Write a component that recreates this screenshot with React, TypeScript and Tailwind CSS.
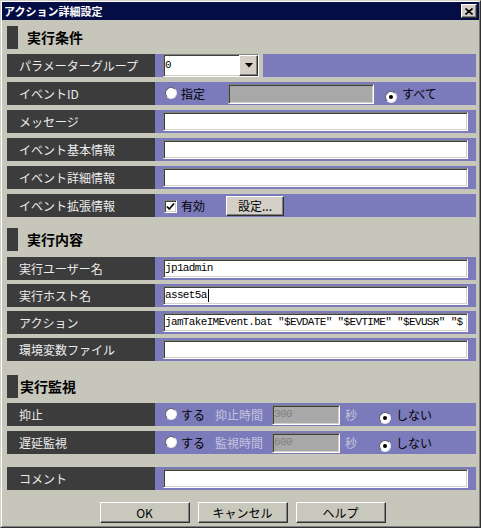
import type { ReactNode } from "react";

const sunken =
  "border border-t-[#808080] border-l-[#808080] border-b-white border-r-white shadow-[inset_1px_1px_0_#404040,inset_-1px_-1px_0_#d4d0c8]";
const raised =
  "border border-t-white border-l-white border-b-[#303030] border-r-[#303030] shadow-[inset_-1px_-1px_0_#808080]";

function Radio({ checked = false }: { checked?: boolean }) {
  return (
    <span className="relative inline-flex w-[12px] h-[12px] shrink-0 rounded-full bg-white border border-t-[#606060] border-l-[#606060] border-b-[#e8e8e8] border-r-[#e8e8e8] items-center justify-center">
      {checked && <span className="w-[4px] h-[4px] rounded-full bg-black" />}
    </span>
  );
}

function Checkbox() {
  return (
    <span className={`inline-flex w-[13px] h-[13px] shrink-0 bg-white ${sunken} items-center justify-center`}>
      <svg width="9" height="9" viewBox="0 0 9 9">
        <path d="M1 4.5 L3.3 7 L8 1.5" fill="none" stroke="#000" strokeWidth="1.7" />
      </svg>
    </span>
  );
}

function Section({ title, tight = false }: { title: string; tight?: boolean }) {
  return (
    <div className="flex h-[23px]">
      <div className="w-[11px] bg-[#3c3c3c]" />
      <div
        className={`flex items-end pb-[1px] text-[14px] font-bold text-black ${
          tight ? "ml-[2px]" : "ml-[9px]"
        }`}
      >
        {title}
      </div>
    </div>
  );
}

function Label({ text }: { text: string }) {
  return (
    <div className="w-[148px] shrink-0 bg-[#3c3c3c] text-[#ececec] text-[12px] flex items-center pl-[12px]">
      {text}
    </div>
  );
}

function Row({ label, children }: { label: string; children?: ReactNode }) {
  return (
    <div className="flex h-[23px]">
      <Label text={label} />
      <div className="flex-1 min-w-0 bg-[#7b7bbb] flex items-center px-[8px] text-[12px] text-black">
        {children}
      </div>
    </div>
  );
}

function TextBox({ value = "", caret = false }: { value?: string; caret?: boolean }) {
  return (
    <div
      className={`flex-1 min-w-0 h-[19px] bg-white ${sunken} flex items-center pl-[1px] overflow-hidden whitespace-nowrap font-['Liberation_Mono',monospace] text-[11px] tracking-[-0.65px] text-black`}
    >
      {value}
      {caret && <span className="w-[1px] h-[13px] bg-black ml-[1px] shrink-0" />}
    </div>
  );
}

function Button({ label }: { label: string }) {
  return (
    <div className={`w-[90px] h-[21px] bg-[#c8c8bc] ${raised} flex items-center justify-center text-[12px] text-black`}>
      {label}
    </div>
  );
}

export default function App() {
  return (
    <div className="w-[481px] h-[528px] bg-[#c6c6ba] border border-t-[#d4d0c8] border-l-[#d4d0c8] border-b-[#303030] border-r-[#303030] font-['Noto_Sans_CJK_JP',sans-serif]">
      <div className="h-full border border-t-white border-l-white border-b-[#808080] border-r-[#808080] flex flex-col">
        {/* Title bar */}
        <div className="h-[18px] bg-[#050d45] flex items-center justify-between pl-[2px] pr-[2px]">
          <span className="text-white font-bold text-[11px] leading-none">アクション詳細設定</span>
          <div className={`w-[16px] h-[14px] bg-[#d4d0c8] ${raised} flex items-center justify-center`}>
            <svg width="8" height="7" viewBox="0 0 8 7">
              <path d="M0.5 0.5 L7.5 6.5 M7.5 0.5 L0.5 6.5" stroke="#000" strokeWidth="1.6" />
            </svg>
          </div>
        </div>

        <div className="flex flex-col pl-[5px] pr-[3px]">
          {/* 実行条件 */}
          <div className="mt-[6px]">
            <Section title="実行条件" />
          </div>
          <div className="mt-[5px] flex flex-col gap-[5px]">
            <div className="flex h-[23px]">
              <Label text="パラメーターグループ" />
              <div className="bg-[#7b7bbb] w-[8px]" />
              <div className={`w-[96px] h-[23px] bg-white ${sunken} flex items-stretch`}>
                <span className="flex-1 flex items-center pl-[1px] font-['Liberation_Mono',monospace] text-[11px] text-black">
                  0
                </span>
                <span className={`w-[19px] bg-[#d4d0c8] ${raised} flex items-center justify-center`}>
                  <svg width="8" height="5" viewBox="0 0 8 5">
                    <path d="M0 0 H8 L4 4.5 Z" fill="#000" />
                  </svg>
                </span>
              </div>
              <div className="w-[4px]" />
              <div className="flex-1 bg-[#7b7bbb]" />
            </div>
            <Row label="イベントID">
              <span className="ml-[2px]">
                <Radio />
              </span>
              <span className="ml-[4px]">指定</span>
              <div className={`ml-[23px] w-[146px] h-[20px] bg-[#a8a8a8] ${sunken}`} />
              <span className="ml-[11px]">
                <Radio checked />
              </span>
              <span className="ml-[5px]">すべて</span>
            </Row>
            <Row label="メッセージ">
              <TextBox />
            </Row>
            <Row label="イベント基本情報">
              <TextBox />
            </Row>
            <Row label="イベント詳細情報">
              <TextBox />
            </Row>
            <Row label="イベント拡張情報">
              <span className="ml-[1px]">
                <Checkbox />
              </span>
              <span className="ml-[4px]">有効</span>
              <div className={`ml-[21px] w-[58px] h-[20px] bg-[#d4d0c8] ${raised} flex items-center justify-center text-[12px]`}>
                設定...
              </div>
            </Row>
          </div>

          {/* 実行内容 */}
          <div className="mt-[11px]">
            <Section title="実行内容" />
          </div>
          <div className="mt-[6px] flex flex-col gap-[4px]">
            <Row label="実行ユーザー名">
              <TextBox value="jp1admin" />
            </Row>
            <Row label="実行ホスト名">
              <TextBox value="asset5a" caret />
            </Row>
            <Row label="アクション">
              <TextBox value={'jamTakeIMEvent.bat "$EVDATE" "$EVTIME" "$EVUSR" "$'} />
            </Row>
            <Row label="環境変数ファイル">
              <TextBox />
            </Row>
          </div>

          {/* 実行監視 */}
          <div className="mt-[14px]">
            <Section title="実行監視" tight />
          </div>
          <div className="mt-[5px] flex flex-col gap-[5px]">
            <Row label="抑止">
              <span className="ml-[2px]">
                <Radio />
              </span>
              <span className="ml-[4px]">する</span>
              <span className="ml-[10px] text-[#c4c4dc]">抑止時間</span>
              <div className={`ml-[9px] w-[68px] h-[20px] bg-[#a8a8a8] ${sunken} flex items-center pl-[1px] font-['Liberation_Mono',monospace] text-[11px] tracking-[-0.6px] text-[#808080]`}>
                300
              </div>
              <span className="ml-[5px] text-[#c4c4dc]">秒</span>
              <span className="ml-[22px]">
                <Radio checked />
              </span>
              <span className="ml-[5px]">しない</span>
            </Row>
            <Row label="遅延監視">
              <span className="ml-[2px]">
                <Radio />
              </span>
              <span className="ml-[4px]">する</span>
              <span className="ml-[10px] text-[#c4c4dc]">監視時間</span>
              <div className={`ml-[9px] w-[68px] h-[20px] bg-[#a8a8a8] ${sunken} flex items-center pl-[1px] font-['Liberation_Mono',monospace] text-[11px] tracking-[-0.6px] text-[#808080]`}>
                600
              </div>
              <span className="ml-[5px] text-[#c4c4dc]">秒</span>
              <span className="ml-[22px]">
                <Radio checked />
              </span>
              <span className="ml-[5px]">しない</span>
            </Row>
          </div>
          <div className="mt-[13px]">
            <Row label="コメント">
              <TextBox />
            </Row>
          </div>

          {/* Buttons */}
          <div className="mt-[12px] flex justify-center gap-[8px] pl-[2px]">
            <Button label="OK" />
            <Button label="キャンセル" />
            <Button label="ヘルプ" />
          </div>
        </div>
      </div>
    </div>
  );
}
